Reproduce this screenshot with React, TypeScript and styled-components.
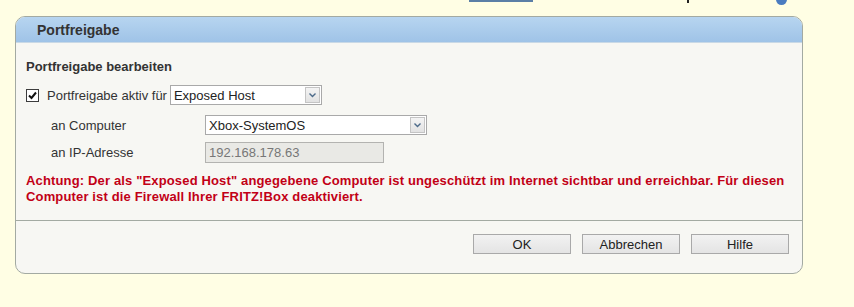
import * as React from "react";
import styled, { createGlobalStyle } from "styled-components";

const GlobalStyle = createGlobalStyle`
  html, body {
    margin: 0;
    padding: 0;
    background: #fffee4;
    font-family: "Liberation Sans", Arial, sans-serif;
    font-size: 13px;
    color: #333;
  }
`;

const Page = styled.div`
  width: 854px;
  height: 307px;
  overflow: hidden;
  position: relative;
`;

const TopStrip = styled.div`
  height: 16px;
  position: relative;
`;

const TabUnderline = styled.div`
  position: absolute;
  left: 469px;
  top: 0;
  width: 64px;
  height: 2px;
  background: #5b7fa6;
`;

const CutGlyph = styled.div`
  position: absolute;
  left: 687px;
  top: 0;
  width: 2px;
  height: 3px;
  background: #222;
`;

const CutDot = styled.div`
  position: absolute;
  left: 776px;
  top: -6px;
  width: 11px;
  height: 11px;
  border-radius: 50%;
  background: #4a7cc0;
`;

const Panel = styled.section`
  margin-left: 15px;
  width: 786px;
  border: 1px solid #a3aaa2;
  border-radius: 10px;
  background: #f7f7f3;
  overflow: hidden;
`;

const PanelHeader = styled.div`
  height: 25px;
  background: linear-gradient(#b7d5f0, #9fc3e7);
  border-bottom: 1px solid #c9d9e6;
  padding-left: 21px;
  display: flex;
  align-items: center;
  font-weight: bold;
  font-size: 14px;
  color: #333;
`;

const PanelBody = styled.div`
  padding: 16px 10px 0 10px;
`;

const SectionTitle = styled.div`
  font-weight: bold;
  color: #333;
  height: 16px;
  margin-bottom: 10px;
`;

const CheckRow = styled.label`
  display: flex;
  align-items: center;
  height: 20px;
  margin-bottom: 10px;
`;

const CheckBox = styled.span`
  width: 13px;
  height: 13px;
  box-sizing: border-box;
  border: 1px solid #3c3c3c;
  background: #fff;
  margin-right: 8px;
  display: flex;
  align-items: center;
  justify-content: center;
`;

const Row = styled.div`
  display: grid;
  grid-template-columns: 154px auto;
  align-items: center;
  padding-left: 25px;
  height: 20px;
  margin-bottom: 7px;
`;

const Select = styled.div<{ $width: number; $gap?: number }>`
  display: flex;
  align-items: center;
  justify-content: space-between;
  width: ${(p) => p.$width}px;
  height: 20px;
  box-sizing: border-box;
  border: 1px solid #a9a9a9;
  background: #fff;
  padding-left: 3px;
  color: #222;
  margin-left: ${(p) => p.$gap ?? 0}px;
`;

const Arrow = styled.div`
  width: 15px;
  height: 16px;
  margin-right: 1px;
  border: 1px solid #c4c4c4;
  box-sizing: border-box;
  background: linear-gradient(#f4f4f4, #e2e2e2);
  display: flex;
  align-items: center;
  justify-content: center;
`;

const Field = styled.div`
  width: 179px;
  height: 21px;
  box-sizing: border-box;
  border: 1px solid #b3b3b0;
  background: #e9e9e5;
  color: #777;
  padding-left: 3px;
  display: flex;
  align-items: center;
`;

const Warning = styled.p`
  margin: 11px 0 0 0;
  color: #c20016;
  font-weight: bold;
  line-height: 16px;
  letter-spacing: 0.15px;
  height: 32px;
`;

const Divider = styled.hr`
  border: none;
  border-top: 1px solid #a3aaa2;
  margin: 15px 0 0 0;
`;

const Footer = styled.div`
  display: flex;
  justify-content: flex-end;
  gap: 11px;
  padding: 13px 13px 19px 0;
`;

const Button = styled.button`
  width: 98px;
  height: 20px;
  border: 1px solid #a9a9a9;
  background: linear-gradient(#f2f2f2, #e4e4e4);
  font-family: "Liberation Sans", Arial, sans-serif;
  font-size: 13px;
  color: #222;
  padding: 0;
`;

const ArrowIcon = () => (
  <Arrow>
    <svg width="7" height="5" viewBox="0 0 7 5">
      <path d="M0.5 0.5 L3.5 3.5 L6.5 0.5" stroke="#4d6b8a" strokeWidth="1.4" fill="none" />
    </svg>
  </Arrow>
);

export default function App() {
  return (
    <Page>
      <GlobalStyle />
      <TopStrip>
        <TabUnderline />
        <CutGlyph />
        <CutDot />
      </TopStrip>
      <Panel>
        <PanelHeader>Portfreigabe</PanelHeader>
        <PanelBody>
          <SectionTitle>Portfreigabe bearbeiten</SectionTitle>
          <CheckRow>
            <CheckBox>
              <svg width="9" height="9" viewBox="0 0 9 9">
                <path d="M1 4.5 L3.5 7 L8 1.5" stroke="#111" strokeWidth="2" fill="none" />
              </svg>
            </CheckBox>
            Portfreigabe aktiv für
            <Select $width={152} $gap={3}>
              Exposed Host
              <ArrowIcon />
            </Select>
          </CheckRow>
          <Row>
            <span>an Computer</span>
            <Select $width={222}>
              Xbox-SystemOS
              <ArrowIcon />
            </Select>
          </Row>
          <Row>
            <span>an IP-Adresse</span>
            <Field>192.168.178.63</Field>
          </Row>
          <Warning>
            Achtung: Der als "Exposed Host" angegebene Computer ist ungeschützt im Internet sichtbar und erreichbar. Für diesen
            <br />
            Computer ist die Firewall Ihrer FRITZ!Box deaktiviert.
          </Warning>
        </PanelBody>
        <Divider />
        <Footer>
          <Button>OK</Button>
          <Button>Abbrechen</Button>
          <Button>Hilfe</Button>
        </Footer>
      </Panel>
    </Page>
  );
}
